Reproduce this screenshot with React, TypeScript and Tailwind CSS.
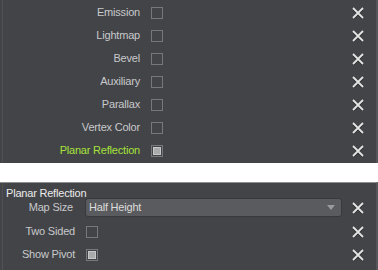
import React from "react";

const XIcon = () => (
  <svg width="12" height="12" viewBox="0 0 12 12" className="block">
    <path d="M1.5 2.5 L10.5 11.5 M10.5 2.5 L1.5 11.5" stroke="#1e1f21" strokeWidth="2" opacity="0.7" />
    <path d="M1 1 L11 11 M11 1 L1 11" stroke="#e4e4e4" strokeWidth="1.8" />
  </svg>
);

const Check = ({ checked }: { checked?: boolean }) => (
  <div className="w-[12px] h-[12px] border border-[#77787b] flex items-center justify-center">
    {checked && <div className="w-[8px] h-[8px] bg-[#a9aaac] border border-[#c8c8c8]" />}
  </div>
);

const rows = [
  { label: "Emission" },
  { label: "Lightmap" },
  { label: "Bevel" },
  { label: "Auxiliary" },
  { label: "Parallax" },
  { label: "Vertex Color" },
  { label: "Planar Reflection", checked: true, green: true },
];

export default function App() {
  return (
    <div
      className="w-[378px] h-[270px] bg-white overflow-hidden text-[11px] tracking-[-0.2px]"
      style={{ fontFamily: '"Liberation Sans", Arial, sans-serif' }}
    >
      <div className="h-[163px] bg-[#434447] flex border-r-2 border-[#55565a]">
        <div className="w-[2px]" />
        <div className="w-[1px] bg-[#505155]" />
        <div className="flex-1 flex flex-col pt-[1px]">
          {rows.map((r) => (
            <div key={r.label} className="h-[23px] flex items-center">
              <div
                className={`w-[137px] text-right ${r.green ? "text-[#a6e33a]" : "text-[#c8c9cc]"}`}
              >
                {r.label}
              </div>
              <div className="ml-[11px]">
                <Check checked={r.checked} />
              </div>
              <div className="flex-1" />
              <div className="mr-[12px]">
                <XIcon />
              </div>
            </div>
          ))}
        </div>
      </div>
      <div className="h-[19px]" />
      <div className="h-[88px] bg-[#434447] border-t border-[#8d8e90] flex border-r-2 border-r-[#55565a]">
        <div className="w-[2px]" />
        <div className="w-[1px] bg-[#505155]" />
        <div className="flex-1 flex flex-col">
          <div className="h-[15px] shrink-0 pt-[5px] pl-[3px] leading-[11px] text-[#ececec]">
            Planar Reflection
          </div>
          <div className="h-[19px] mb-[3px] flex items-center">
            <div className="w-[70px] text-right text-[#c8c9cc]">Map Size</div>
            <div className="ml-[12px] w-[257px] h-[19px] rounded-[3px] bg-[#5a5b5e] border border-[#38393c] flex items-center pl-[3px] pr-[6px] text-[#dcdcdc]">
              <span className="flex-1">Half Height</span>
              <svg width="8" height="5" viewBox="0 0 8 5">
                <path d="M0 0 L8 0 L4 5 Z" fill="#9a9b9d" />
              </svg>
            </div>
            <div className="flex-1" />
            <div className="mr-[12px]">
              <XIcon />
            </div>
          </div>
          {[
            { label: "Two Sided" },
            { label: "Show Pivot", checked: true },
          ].map((r) => (
            <div key={r.label} className="h-[23px] flex items-center">
              <div className="w-[72px] text-right text-[#c8c9cc]">{r.label}</div>
              <div className="ml-[11px]">
                <Check checked={r.checked} />
              </div>
              <div className="flex-1" />
              <div className="mr-[12px]">
                <XIcon />
              </div>
            </div>
          ))}
        </div>
      </div>
    </div>
  );
}
